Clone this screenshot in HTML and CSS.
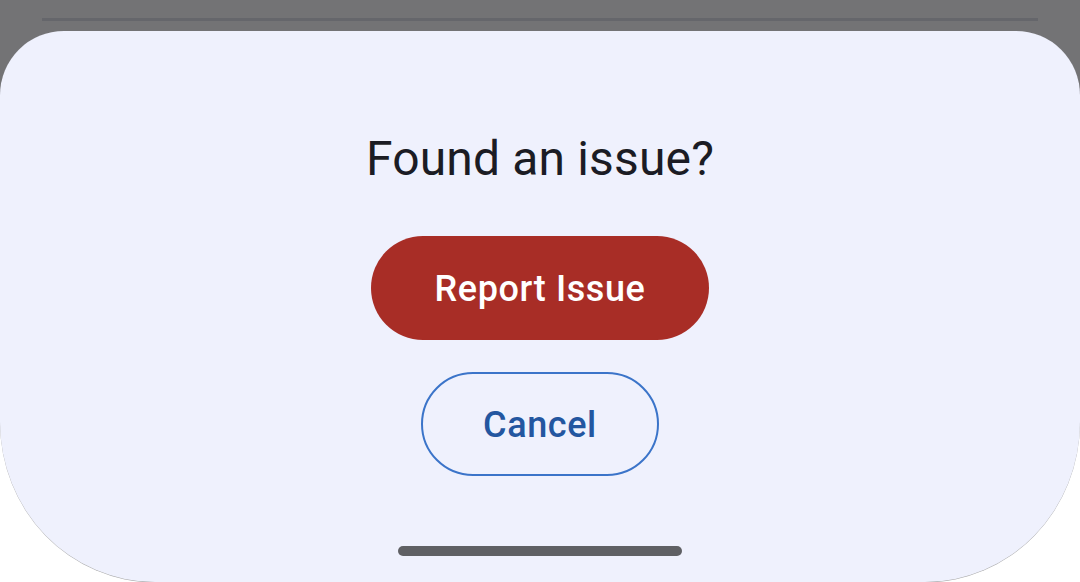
FILE: index.html
```html
<!DOCTYPE html>
<html>
<head>
<meta charset="utf-8">
<link rel="stylesheet" href="styles.css">
</head>
<body>
<div class="screen">
  <div class="scrim">
    <div class="scrim-line"></div>
  </div>
  <div class="sheet">
    <h1 class="title">Found an issue?</h1>
    <button class="btn btn-report">Report Issue</button>
    <button class="btn btn-cancel">Cancel</button>
    <div class="home-indicator"></div>
  </div>
</div>
</body>
</html>
```

FILE: styles.css
```css
html, body {
  margin: 0;
  padding: 0;
}
body {
  width: 1080px;
  height: 582px;
  overflow: hidden;
  font-family: Roboto, "Noto Sans", sans-serif;
}
.screen {
  width: 1080px;
  height: 582px;
  display: flex;
  flex-direction: column;
  background: linear-gradient(to bottom, #737375 0, #737375 120px, #ffffff 120px, #ffffff 100%);
}
.scrim {
  height: 31px;
  padding: 18px 42px 0 42px;
  box-sizing: border-box;
  flex: none;
}
.scrim-line {
  height: 3px;
  background: #65666b;
}
.sheet {
  flex: 1;
  background: #eff1fd;
  border-radius: 64px 64px 155px 155px / 64px 64px 160px 160px;
  display: flex;
  flex-direction: column;
  align-items: center;
  padding-top: 100px;
  box-sizing: border-box;
  box-shadow: 0 0.5px 0.5px rgba(0, 0, 0, 0.35);
}
.title {
  margin: 0;
  font-size: 48px;
  line-height: 56px;
  font-weight: 400;
  color: #1b1c24;
  letter-spacing: 0.15px;
}
.btn {
  font-family: Roboto, "Noto Sans", sans-serif;
  font-size: 36px;
  font-weight: 500;
  letter-spacing: 0.6px;
  height: 104px;
  border-radius: 52px;
  box-sizing: border-box;
  padding: 2px 0 0 0;
  cursor: pointer;
}
.btn-report {
  margin-top: 49px;
  width: 338px;
  background: #a82d26;
  color: #ffffff;
  border: none;
}
.btn-cancel {
  margin-top: 32px;
  width: 238px;
  background: transparent;
  color: #2356a0;
  border: 2px solid #3b74c9;
}
.home-indicator {
  margin-top: 70px;
  width: 284px;
  height: 10px;
  border-radius: 5px;
  background: #5f6064;
}
```
